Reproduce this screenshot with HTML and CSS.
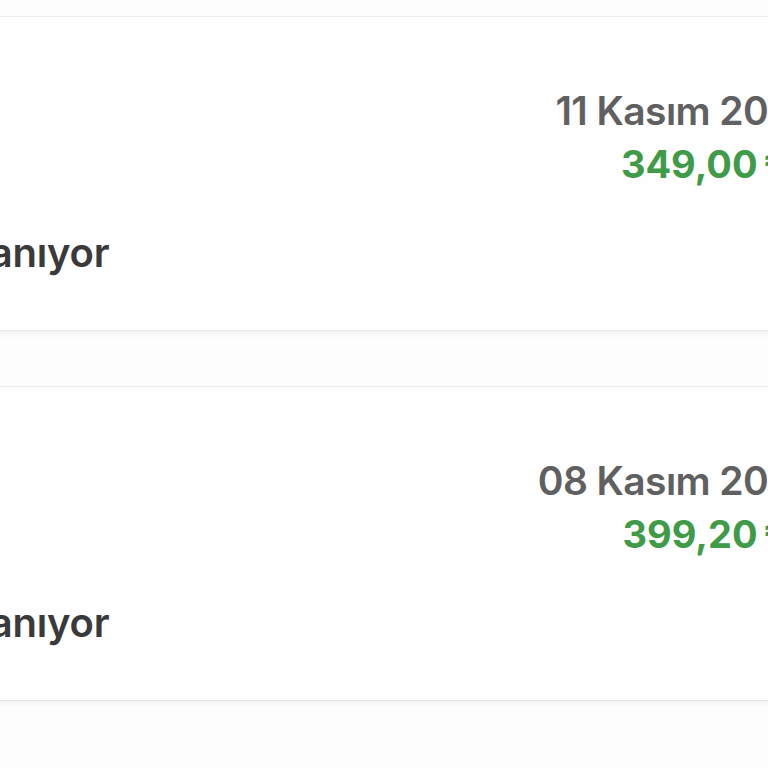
FILE: index.html
```html
<!DOCTYPE html>
<html lang="tr">
<head>
<meta charset="utf-8">
<title>Siparişlerim</title>
<link rel="stylesheet" href="styles.css">
</head>
<body>
<div class="list">
  <div class="card">
    <div class="top">
      <div class="meta">
        <div class="date">11 Kasım 2023</div>
        <div class="price">349,00 ₺</div>
      </div>
    </div>
    <div class="status">Hazırlanıyor</div>
  </div>
  <div class="card">
    <div class="top">
      <div class="meta">
        <div class="date">08 Kasım 2023</div>
        <div class="price">399,20 ₺</div>
      </div>
    </div>
    <div class="status">Hazırlanıyor</div>
  </div>
</div>
</body>
</html>
```

FILE: styles.css
```css
html, body {
  margin: 0;
  padding: 0;
  background: #fdfdfd;
  overflow: hidden;
  height: 768px;
}
body {
  font-family: Inter, "Noto Sans", sans-serif;
}
.list {
  display: flex;
  flex-direction: column;
  gap: 55px;
  padding-top: 16px;
  margin-left: -120px;
  width: 960px;
}
.card {
  box-sizing: border-box;
  height: 315px;
  flex: none;
  background: #fefefe;
  border-top: 1px solid #ececec;
  border-bottom: 1px solid #e4e4e4;
  box-shadow: 0 3px 6px rgba(0, 0, 0, 0.045);
  padding: 72px 24px 0 0;
  display: flex;
  flex-direction: column;
}
.top {
  display: flex;
  justify-content: flex-end;
}
.meta {
  display: flex;
  flex-direction: column;
  align-items: flex-end;
}
.date {
  font-size: 39px;
  line-height: 44px;
  font-weight: 600;
  color: #606060;
  letter-spacing: -0.6px;
}
.price {
  margin-top: 9px;
  margin-right: 28px;
  font-size: 38px;
  line-height: 44px;
  font-weight: 700;
  color: #3f9b48;
  word-spacing: -3px;
}
.status {
  margin-top: 45px;
  margin-left: -2px;
  font-size: 40px;
  line-height: 44px;
  font-weight: 600;
  color: #3a3a3a;
  letter-spacing: -0.2px;
}
```
